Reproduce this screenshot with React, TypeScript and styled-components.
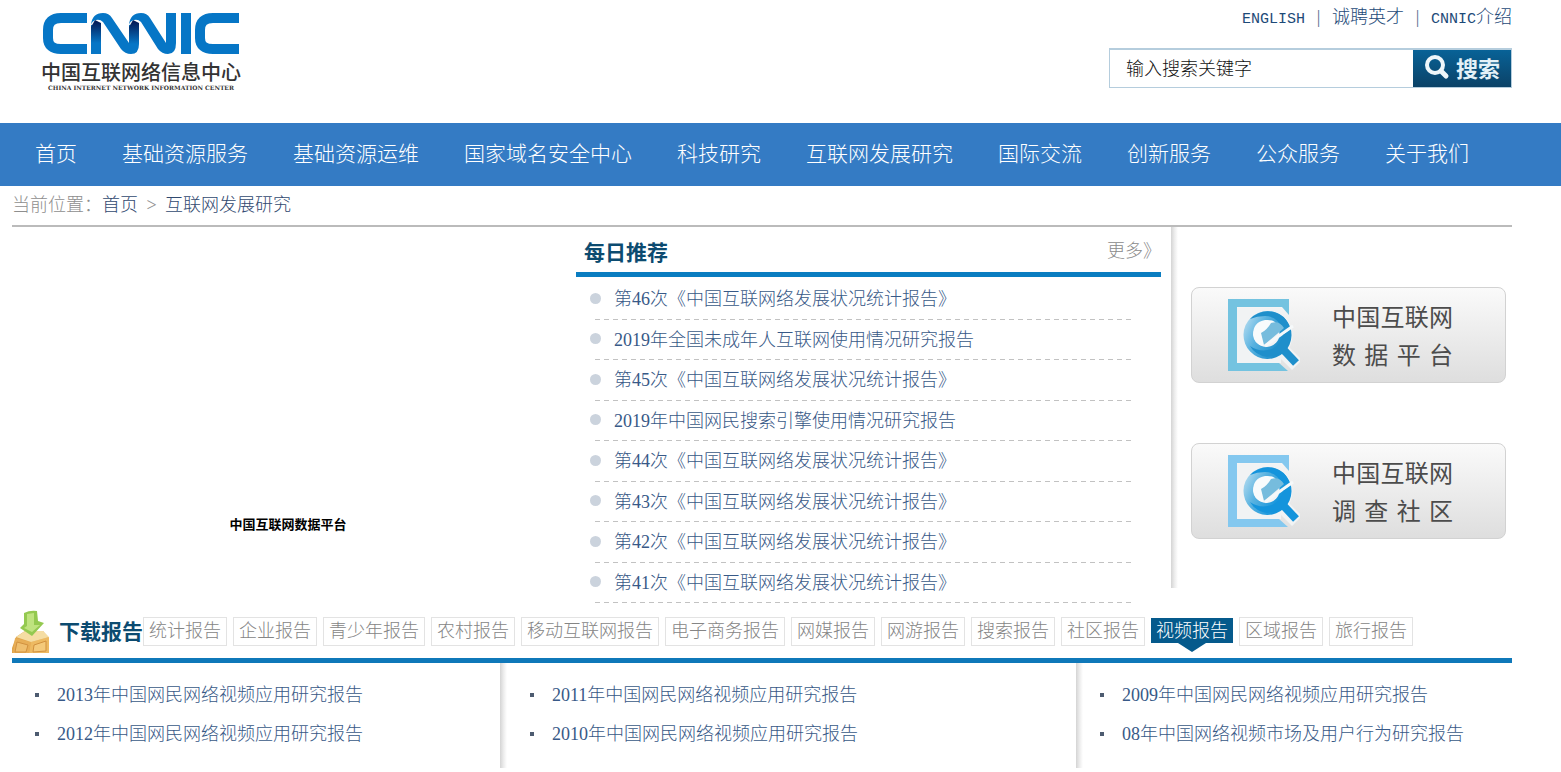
import React from "react";
import styled, { createGlobalStyle, css } from "styled-components";

const song = `"Liberation Serif", "Noto Sans CJK SC", serif`;
const hei = `"Noto Sans CJK SC", sans-serif`;

const GlobalStyle = createGlobalStyle`
  *, *::before, *::after { box-sizing: border-box; }
  body {
    margin: 0;
    background: #fff;
    color: #385987;
    font: 300 18px/24px ${song};
  }
  a { color: inherit; text-decoration: none; }
  ul, h1, h2, p { margin: 0; padding: 0; }
  ul { list-style: none; }
`;

const Header = styled.header`
  display: flex;
  justify-content: space-between;
  align-items: flex-start;
  min-height: 123px;
  padding: 5px 49px 0 41px;
`;

const Logo = styled.a`
  display: flex;
  flex-direction: column;
  align-items: center;
  width: 200px;
  padding-top: 8px;
  color: #333;
`;

const LogoMark = styled.svg`
  display: block;
  width: 196px;
  height: 42px;
`;

const LogoName = styled.span`
  margin-top: 5px;
  font: 500 20px/24px ${hei};
  white-space: nowrap;
`;

const LogoCaption = styled.span`
  font: 700 6px/8px "DejaVu Serif", serif;
  white-space: nowrap;
`;

const HeaderTools = styled.div`
  display: flex;
  flex-direction: column;
  align-items: flex-end;
  gap: 19px;
`;

const TopLinks = styled.nav`
  display: flex;
  height: 24px;
  color: #1d4a78;
`;

const Separator = styled.span`
  width: 27px;
  text-align: center;
  color: #56708f;
`;

const Latin = styled.span`
  font-family: "Liberation Mono", monospace;
  font-size: 15px;
`;

const SearchForm = styled.form`
  display: flex;
  width: 403px;
  height: 40px;
  border: 1px solid #b5cddd;
  border-top-width: 2px;
`;

const SearchInput = styled.input`
  flex: 1;
  min-width: 0;
  padding: 0 16px 4px;
  border: 0;
  outline: 0;
  background: transparent;
  color: #111;
  font: 300 18px/24px ${hei};
`;

const SearchButton = styled.button`
  display: flex;
  align-items: center;
  gap: 6px;
  width: 98px;
  padding: 0 10px 4px 11px;
  border: 0;
  background: linear-gradient(#086297, #0b4267);
  color: #e4f1f8;
  font: 700 22px/24px ${hei};
  white-space: nowrap;

  svg { flex: none; }
`;

const MainNav = styled.nav`
  display: flex;
  align-items: center;
  gap: 45px;
  min-height: 63px;
  padding: 0 49px 2px 35px;
  background: #347bc4;
  color: #fff;
  font-size: 21px;
  white-space: nowrap;
`;

const Page = styled.main`
  margin: 0 49px 0 12px;
`;

const Breadcrumb = styled.nav`
  display: flex;
  align-items: center;
  height: 41px;
  padding-bottom: 1px;
  border-bottom: 2px solid #bbb;
  color: #8e8e8e;

  a { color: #31496f; }
`;

const Crumb = styled.span`
  width: 27px;
  text-align: center;
`;

const Featured = styled.section`
  display: flex;
  align-items: flex-start;
`;

const Banner = styled.div`
  flex: 1;
  padding: 288px 12px 0 0;
  color: #000;
  font: 700 13px/18px ${hei};
  text-align: center;
`;

const Daily = styled.section`
  width: 585px;
  margin-right: 10px;
`;

const DailyHead = styled.div`
  display: flex;
  justify-content: space-between;
  align-items: center;
  height: 50px;
  padding: 2px 8px 0;
  border-bottom: 5px solid #0a7dc1;
`;

const Title = styled.h2`
  color: #0c4b70;
  font: 700 21px/28px ${hei};
  white-space: nowrap;
`;

const More = styled.a`
  width: 46px;
  color: #8a8a8a;
  line-height: 28px;
  white-space: nowrap;
`;

const DailyList = styled.ul`
  display: grid;
  grid-template-rows: repeat(8, 1fr);
  height: 324px;
  margin: 2px 30px 0 19px;
`;

const DailyItem = styled.li`
  display: flex;
  align-items: center;
  background: repeating-linear-gradient(90deg, #c2c2c2 0 5px, transparent 5px 9px) bottom / 100% 1px no-repeat;

  &::before {
    content: "";
    width: 11px;
    height: 11px;
    margin: 0 13px 2px -5px;
    border-radius: 50%;
    background: #cbd3dd;
  }
`;

const shadowEdge = css`
  background: linear-gradient(90deg, #d4d4d4, #ececec 50%, #fff) left / 7px 100% no-repeat;
`;

const Platforms = styled.aside`
  display: flex;
  flex-direction: column;
  gap: 60px;
  width: 341px;
  min-height: 361px;
  padding: 60px 6px 0 20px;
  ${shadowEdge}
`;

const PlatformCard = styled.a`
  display: flex;
  align-items: center;
  height: 96px;
  padding: 0 52px 0 36px;
  justify-content: space-between;
  border: 1px solid #d2d2d2;
  border-radius: 8px;
  background: linear-gradient(#fafafa, #ececec 50%, #dedede);
  color: #4c4c4c;
`;

const PlatformText = styled.span`
  display: flex;
  flex-direction: column;
  width: 121px;
  font: 400 24px/38px ${hei};
  text-align-last: justify;
  white-space: nowrap;
`;

const Downloads = styled.section`
  margin-top: 5px;
`;

const TabBar = styled.div`
  display: flex;
  align-items: center;
  height: 55px;
  padding-bottom: 3px;
  border-bottom: 5px solid #0f78b9;
`;

const DownloadTitle = styled(Title)`
  padding-bottom: 4px;
  margin-left: 9px;
`;

const Tabs = styled.div`
  display: flex;
  align-items: flex-start;
  gap: 6px;
  height: 29px;
`;

const Tab = styled.button<{ $active?: boolean }>`
  position: relative;
  height: 29px;
  padding: 0 5px 2px;
  border: 1px solid #e3e3e3;
  background: #fff;
  color: #858585;
  font: inherit;
  white-space: nowrap;

  ${({ $active }) =>
    $active &&
    css`
      height: 25px;
      margin-top: 1px;
      padding-bottom: 0;
      border: 0;
      background: #055a8c;
      color: #fff;

      &::after {
        content: "";
        position: absolute;
        top: 100%;
        left: 50%;
        margin-left: -14px;
        border: 14px solid transparent;
        border-top: 9px solid #055a8c;
        border-bottom: 0;
      }
    `}
`;

const Columns = styled.div`
  display: grid;
  grid-template-columns: 488fr 576fr 436fr;
`;

const Column = styled.ul<{ $edge?: boolean; $indent: number }>`
  min-height: 105px;
  padding: 12px 0 0 ${({ $indent }) => $indent}px;
  ${({ $edge }) => $edge && shadowEdge}
`;

const Report = styled.li`
  display: flex;
  align-items: center;
  height: 39px;
  white-space: nowrap;

  &::before {
    content: "";
    width: 4px;
    height: 4px;
    margin-right: 18px;
    background: #4d5b70;
  }
`;

const navItems = ["首页", "基础资源服务", "基础资源运维", "国家域名安全中心", "科技研究", "互联网发展研究", "国际交流", "创新服务", "公众服务", "关于我们"];

const dailyItems = [
  "第46次《中国互联网络发展状况统计报告》",
  "2019年全国未成年人互联网使用情况研究报告",
  "第45次《中国互联网络发展状况统计报告》",
  "2019年中国网民搜索引擎使用情况研究报告",
  "第44次《中国互联网络发展状况统计报告》",
  "第43次《中国互联网络发展状况统计报告》",
  "第42次《中国互联网络发展状况统计报告》",
  "第41次《中国互联网络发展状况统计报告》",
];

const tabs = ["统计报告", "企业报告", "青少年报告", "农村报告", "移动互联网报告", "电子商务报告", "网媒报告", "网游报告", "搜索报告", "社区报告", "视频报告", "区域报告", "旅行报告"];

const columns = [
  { indent: 23, items: ["2013年中国网民网络视频应用研究报告", "2012年中国网民网络视频应用研究报告"] },
  { indent: 30, items: ["2011年中国网民网络视频应用研究报告", "2010年中国网民网络视频应用研究报告"] },
  { indent: 24, items: ["2009年中国网民网络视频应用研究报告", "08年中国网络视频市场及用户行为研究报告"] },
];

const platforms = [
  { second: "数 据 平 台", frame: "#74c3e0", tone: "#1f8fcb" },
  { second: "调 查 社 区", frame: "#84c8ef", tone: "#1494dc" },
];

function CnnicMark() {
  return (
    <LogoMark viewBox="0 0 196 42" aria-hidden="true">
      <defs>
        <linearGradient id="fold" x1="0" y1="0" x2="0" y2="1">
          <stop offset="0" stopColor="#04144f" />
          <stop offset="1" stopColor="#0676c6" />
        </linearGradient>
      </defs>
      <g fill="none" stroke="#0676c6" strokeWidth="10">
        <path d="M44 5H18Q5 5 5 17V25Q5 36 18 36H44" />
        <path d="M53 41V12" />
        <path d="M91 30V12" />
        <path d="M128 0V30" />
        <path d="M143 0V41" />
        <path d="M196 5H170Q157 5 157 17V25Q157 36 170 36H196" />
      </g>
      <path d="M48 14L52 7L58 10V30H48Z" fill="url(#fold)" />
      <path d="M86 14L90 7L96 10V31H86Z" fill="url(#fold)" />
      <g fill="#0676c6">
        <path d="M48 12Q49 0 60 0Q66 0 69 5L86 30V31H96Q96 41 88 41Q82 41 78 36L60 9Q57 6 53 7Q49 8 48 12Z" />
        <path d="M86 12Q87 0 98 0Q104 0 107 5L123 30H133Q133 41 125 41Q119 41 115 36L98 9Q95 6 91 7Q87 8 86 12Z" />
      </g>
    </LogoMark>
  );
}

function SearchIcon() {
  return (
    <svg width="26" height="28" viewBox="0 0 26 28" aria-hidden="true">
      <circle cx="11" cy="12" r="8" fill="none" stroke="#eef6fa" strokeWidth="4" />
      <path d="M17 18L22 23" stroke="#eef6fa" strokeWidth="5" strokeLinecap="round" />
    </svg>
  );
}

function PlatformIcon({ frame, tone, id }: { frame: string; tone: string; id: string }) {
  return (
    <svg width="72" height="74" viewBox="0 0 72 74" aria-hidden="true">
      <defs>
        <linearGradient id={id} x1="0" y1="0.2" x2="0.8" y2="0.6">
          <stop offset="0" stopColor="#b4dcf0" />
          <stop offset="0.45" stopColor="#58b2e0" />
          <stop offset="1" stopColor={tone} />
        </linearGradient>
      </defs>
      <path d="M0 1H61V17L54 9H9V65H51L60 73H0Z" fill={frame} />
      <path d="M9 10H53V65H9Z" fill="#f1f3f4" />
      <path d="M38 10A27 27 0 1 1 37 64A27 27 0 1 1 38 10Z" fill="#f1f3f4" />
      <path d="M52 50L69 67" stroke="#f1f3f4" strokeWidth="14" />
      <path d="M52 48L68 65" stroke={tone} strokeWidth="8" />
      <path
        fillRule="evenodd"
        d="M40 13A24 24 0 1 1 39 61A24 24 0 1 1 40 13ZM38 23A13 13 0 1 0 39 49A13 13 0 1 0 38 23Z"
        fill={`url(#${id})`}
      />
      <path d="M22 21Q32 11 46 14Q57 17 61 27L55 31Q49 18 37 18Q29 18 22 21Z" fill={tone} />
      <path d="M25 37Q25 24 37 22Q48 21 49 28L35 48Q26 46 25 37Z" fill="#f8fbfc" />
      <path d="M33 35Q39 32 43 25Q51 22 56 30L36 47Z" fill="#76bcdd" />
      <path d="M37 48L65 28" stroke="#f6f9fa" strokeWidth="3" />
      <path d="M63 32Q63 46 55 52Q49 58 39 59Q27 57 22 48Q32 55 44 51Q54 46 55 37Z" fill={tone} />
    </svg>
  );
}

function DownloadIcon() {
  return (
    <svg width="38" height="43" viewBox="0 0 38 43" aria-hidden="true">
      <path d="M4 27L13 21H31L37 28V43H0V38Z" fill="#e0a44b" />
      <path d="M3 28L19 32L17 43H1Z" fill="#e7ae57" />
      <path d="M19 32L37 27V43H17Z" fill="#edba62" />
      <path d="M22 35L34 31V41L21 42Z" fill="#f4ca7b" stroke="#d1913f" />
      <path d="M5 32L16 35L14 42H3Z" fill="#efbf6f" stroke="#d1913f" />
      <path d="M4 27L13 21H31L37 27L19 32Z" fill="#f5dda3" />
      <path d="M12 3Q18 0 25 1L26 11L32 13L20 26L8 18L12 14Z" fill="#94c950" />
      <path d="M15 4L22 3L22 15L28 15L20 22L12 18L15 16Z" fill="#bfe37f" />
    </svg>
  );
}

export default function App() {
  return (
    <>
      <GlobalStyle />
      <Header>
        <Logo href="#">
          <CnnicMark />
          <LogoName>中国互联网络信息中心</LogoName>
          <LogoCaption>CHINA INTERNET NETWORK INFORMATION CENTER</LogoCaption>
        </Logo>
        <HeaderTools>
          <TopLinks>
            <a href="#"><Latin>ENGLISH</Latin></a>
            <Separator>|</Separator>
            <a href="#">诚聘英才</a>
            <Separator>|</Separator>
            <a href="#"><Latin>CNNIC</Latin>介绍</a>
          </TopLinks>
          <SearchForm onSubmit={(e) => e.preventDefault()}>
            <SearchInput aria-label="搜索关键字" defaultValue="输入搜索关键字" />
            <SearchButton type="submit"><SearchIcon />搜索</SearchButton>
          </SearchForm>
        </HeaderTools>
      </Header>
      <MainNav>
        {navItems.map((item) => <a href="#" key={item}>{item}</a>)}
      </MainNav>
      <Page>
        <Breadcrumb>
          <span>当前位置：</span>
          <a href="#">首页</a>
          <Crumb>&gt;</Crumb>
          <a href="#">互联网发展研究</a>
        </Breadcrumb>
        <Featured>
          <Banner>中国互联网数据平台</Banner>
          <Daily>
            <DailyHead>
              <Title>每日推荐</Title>
              <More href="#">更多》</More>
            </DailyHead>
            <DailyList>
              {dailyItems.map((item) => (
                <DailyItem key={item}><a href="#">{item}</a></DailyItem>
              ))}
            </DailyList>
          </Daily>
          <Platforms>
            {platforms.map((p, i) => (
              <PlatformCard href="#" key={p.second}>
                <PlatformIcon frame={p.frame} tone={p.tone} id={`lens${i}`} />
                <PlatformText>
                  <span>中国互联网</span>
                  <span>{p.second}</span>
                </PlatformText>
              </PlatformCard>
            ))}
          </Platforms>
        </Featured>
        <Downloads>
          <TabBar>
            <DownloadIcon />
            <DownloadTitle>下载报告</DownloadTitle>
            <Tabs>
              {tabs.map((tab) => (
                <Tab type="button" key={tab} $active={tab === "视频报告"}>{tab}</Tab>
              ))}
            </Tabs>
          </TabBar>
          <Columns>
            {columns.map((col, i) => (
              <Column key={col.items[0]} $indent={col.indent} $edge={i > 0}>
                {col.items.map((item) => (
                  <Report key={item}><a href="#">{item}</a></Report>
                ))}
              </Column>
            ))}
          </Columns>
        </Downloads>
      </Page>
    </>
  );
}
